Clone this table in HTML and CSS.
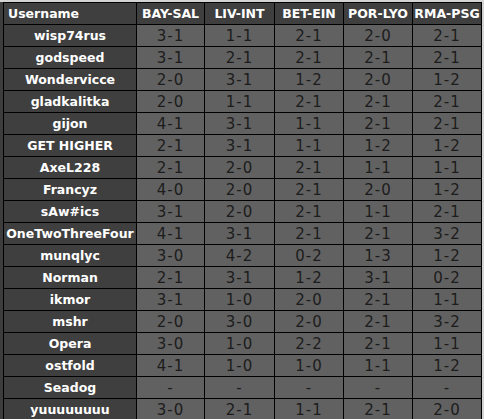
FILE: index.html
```html
<!DOCTYPE html>
<html>
<head>
<meta charset="utf-8">
<link rel="stylesheet" href="styles.css">
</head>
<body>
<div class="sheet">
  <div class="grid">
    <div class="hd hd-user">Username</div>
    <div class="hd">BAY-SAL</div>
    <div class="hd">LIV-INT</div>
    <div class="hd">BET-EIN</div>
    <div class="hd">POR-LYO</div>
    <div class="hd">RMA-PSG</div>

    <div class="user">wisp74rus</div><div class="sc">3-1</div><div class="sc">1-1</div><div class="sc">2-1</div><div class="sc">2-0</div><div class="sc">2-1</div>
    <div class="user">godspeed</div><div class="sc">3-1</div><div class="sc">2-1</div><div class="sc">2-1</div><div class="sc">2-1</div><div class="sc">2-1</div>
    <div class="user">Wondervicce</div><div class="sc">2-0</div><div class="sc">3-1</div><div class="sc">1-2</div><div class="sc">2-0</div><div class="sc">1-2</div>
    <div class="user">gladkalitka</div><div class="sc">2-0</div><div class="sc">1-1</div><div class="sc">2-1</div><div class="sc">2-1</div><div class="sc">2-1</div>
    <div class="user">gijon</div><div class="sc">4-1</div><div class="sc">3-1</div><div class="sc">1-1</div><div class="sc">2-1</div><div class="sc">2-1</div>
    <div class="user">GET HIGHER</div><div class="sc">2-1</div><div class="sc">3-1</div><div class="sc">1-1</div><div class="sc">1-2</div><div class="sc">1-2</div>
    <div class="user">AxeL228</div><div class="sc">2-1</div><div class="sc">2-0</div><div class="sc">2-1</div><div class="sc">1-1</div><div class="sc">1-1</div>
    <div class="user">Francyz</div><div class="sc">4-0</div><div class="sc">2-0</div><div class="sc">2-1</div><div class="sc">2-0</div><div class="sc">1-2</div>
    <div class="user">sAw#ics</div><div class="sc">3-1</div><div class="sc">2-0</div><div class="sc">2-1</div><div class="sc">1-1</div><div class="sc">2-1</div>
    <div class="user">OneTwoThreeFour</div><div class="sc">4-1</div><div class="sc">3-1</div><div class="sc">2-1</div><div class="sc">2-1</div><div class="sc">3-2</div>
    <div class="user">munqlyc</div><div class="sc">3-0</div><div class="sc">4-2</div><div class="sc">0-2</div><div class="sc">1-3</div><div class="sc">1-2</div>
    <div class="user">Norman</div><div class="sc">2-1</div><div class="sc">3-1</div><div class="sc">1-2</div><div class="sc">3-1</div><div class="sc">0-2</div>
    <div class="user">ikmor</div><div class="sc">3-1</div><div class="sc">1-0</div><div class="sc">2-0</div><div class="sc">2-1</div><div class="sc">1-1</div>
    <div class="user">mshr</div><div class="sc">2-0</div><div class="sc">3-0</div><div class="sc">2-0</div><div class="sc">2-1</div><div class="sc">3-2</div>
    <div class="user">Opera</div><div class="sc">3-0</div><div class="sc">1-0</div><div class="sc">2-2</div><div class="sc">2-1</div><div class="sc">1-1</div>
    <div class="user">ostfold</div><div class="sc">4-1</div><div class="sc">1-0</div><div class="sc">1-0</div><div class="sc">1-1</div><div class="sc">1-2</div>
    <div class="user">Seadog</div><div class="sc">-</div><div class="sc">-</div><div class="sc">-</div><div class="sc">-</div><div class="sc">-</div>
    <div class="user">yuuuuuuuu</div><div class="sc">3-0</div><div class="sc">2-1</div><div class="sc">1-1</div><div class="sc">2-1</div><div class="sc">2-0</div>
  </div>
</div>
</body>
</html>
```
FILE: styles.css
```css
html, body {
  margin: 0;
  padding: 0;
  background: #d4d4d4;
  overflow: hidden;
}
.sheet {
  padding-top: 2px;
  width: 484px;
  height: 419px;
  box-sizing: border-box;
  overflow: hidden;
  background: #d4d4d4;
}
.grid {
  display: grid;
  grid-template-columns: 132px 67px 69px 68px 68px 68px;
  grid-auto-rows: 21px;
  gap: 1px;
  padding: 1px;
  background: #000;
  width: max-content;
  border-left: 3px solid #3d3d3d;
}
.hd, .user {
  background: #3f3f3f;
  color: #fff;
  font-family: "DejaVu Sans", sans-serif;
  font-weight: bold;
  font-size: 12.5px;
  display: flex;
  align-items: center;
  justify-content: center;
  white-space: nowrap;
}
.hd-user {
  justify-content: flex-start;
  padding-left: 4px;
}
.sc {
  background: #616161;
  color: #1c1c1c;
  font-family: "DejaVu Sans", sans-serif;
  font-size: 15px;
  letter-spacing: 1px;
  display: flex;
  align-items: center;
  justify-content: center;
}
```
